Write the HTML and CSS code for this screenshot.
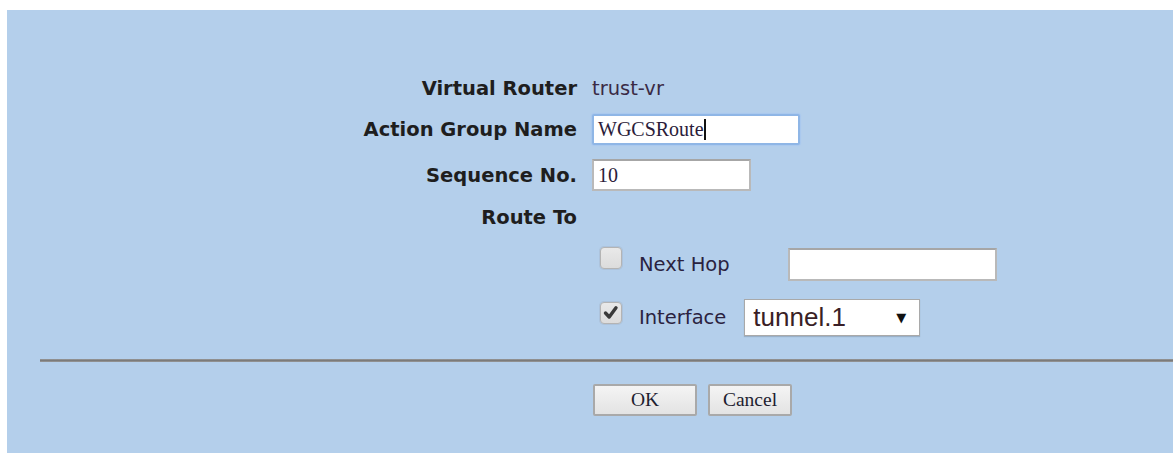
FILE: index.html
```html
<!DOCTYPE html>
<html lang="en">
<head>
<meta charset="utf-8">
<title>Routing Action Group</title>
<link rel="stylesheet" href="styles.css">
</head>
<body>
<div class="panel">
  <form class="route-form">
    <div class="fields">
      <label class="lbl">Virtual Router</label>
      <span class="val">trust-vr</span>

      <label class="lbl">Action Group Name</label>
      <span class="val"><span class="textbox textbox-focus name-box">WGCSRoute<span class="caret"></span></span></span>

      <label class="lbl">Sequence No.</label>
      <span class="val"><span class="textbox seq-box">10</span></span>

      <label class="lbl">Route To</label>
      <span class="val"></span>
    </div>

    <div class="options">
      <div class="opt-row">
        <span class="check"></span>
        <span class="opt-label hop-label">Next Hop</span>
        <span class="textbox hop-box"></span>
      </div>
      <div class="opt-row">
        <span class="check check-on">
          <svg viewBox="0 0 20 20" width="20" height="20"><path d="M4.5 10 L8.2 14 L15 4.8" fill="none" stroke="#3a3a3a" stroke-width="3.4" stroke-linecap="round" stroke-linejoin="round"/></svg>
        </span>
        <span class="opt-label">Interface</span>
        <span class="dropdown"><span class="dropdown-text">tunnel.1</span><span class="dropdown-arrow">&#9660;</span></span>
      </div>
    </div>

    <hr class="rule">

    <div class="actions">
      <button type="button" class="btn btn-ok">OK</button>
      <button type="button" class="btn btn-cancel">Cancel</button>
    </div>
  </form>
</div>
</body>
</html>
```

FILE: styles.css
```css
html, body {
  margin: 0;
  padding: 0;
  background: #ffffff;
}

.panel {
  margin: 10px 0 0 7px;
  height: 443px;
  background: #b4cfeb;
  overflow: hidden;
}

.route-form {
  margin: 0;
  padding-top: 58px;
  font-family: "DejaVu Sans", Verdana, sans-serif;
  color: #1e1e1e;
}

/* label / value grid */
.fields {
  display: grid;
  grid-template-columns: 570px auto;
  grid-template-rows: 40px 42px 50px 34px;
  column-gap: 15px;
  align-items: center;
}

.lbl {
  justify-self: end;
  font-weight: bold;
  font-size: 19.5px;
  white-space: nowrap;
}

.val {
  display: flex;
  align-items: center;
  font-size: 19.5px;
  color: #3a2a45;
}

.textbox {
  box-sizing: border-box;
  display: flex;
  align-items: center;
  background: #ffffff;
  border: 2px solid #b9b9b9;
  border-top-color: #a6a6a6;
  font-family: "Liberation Serif", "Times New Roman", serif;
  font-size: 20px;
  color: #2b1c3a;
  padding: 0 4px;
}

.textbox-focus {
  border: 2px solid #8fb6e6;
  box-shadow: 0 0 1px 1px #a9c8ef;
  border-radius: 2px;
}

.name-box {
  width: 208px;
  height: 31px;
}

.seq-box {
  width: 159px;
  height: 32px;
}

.caret {
  display: inline-block;
  width: 2px;
  height: 21px;
  background: #111;
}

/* route-to choices */
.options {
  margin: 13px 0 0 593px;
  display: flex;
  flex-direction: column;
  gap: 17px;
}

.opt-row {
  display: flex;
  align-items: center;
}

.opt-row:first-child {
  height: 35px;
}

.opt-row:last-child {
  height: 37px;
}

.check {
  box-sizing: border-box;
  width: 22px;
  height: 22px;
  border: 1px solid #b4b4b4;
  border-radius: 4px;
  background: linear-gradient(#e9e9e9, #dcdcdc);
  box-shadow: 0 0 0 1px rgba(150, 160, 175, 0.25);
  align-self: flex-start;
  display: flex;
  align-items: center;
  justify-content: center;
}

.check-on {
  margin-top: 3px;
}

.opt-label {
  margin-left: 17px;
  font-size: 19.5px;
  color: #2a2240;
  white-space: nowrap;
}

.hop-label {
  width: 149px;
}

.hop-box {
  width: 209px;
  height: 33px;
}

.dropdown {
  box-sizing: border-box;
  margin-left: 18px;
  width: 176px;
  height: 37px;
  display: flex;
  align-items: center;
  justify-content: space-between;
  background: #ffffff;
  border: 1px solid #a9a9a9;
  box-shadow: 0 1px 1px rgba(0, 0, 0, 0.15);
  padding: 0 13px 0 8px;
}

.dropdown-text {
  font-family: "Liberation Sans", Arial, sans-serif;
  font-size: 26px;
  color: #3a1f26;
}

.dropdown-arrow {
  font-family: "DejaVu Sans", sans-serif;
  font-size: 13px;
  color: #111;
}

.rule {
  margin: 23px 0 0 33px;
  height: 3px;
  border: 0;
  background: linear-gradient(#9a9a9a, #7b7b7b 50%, #9a9a9a);
}

.actions {
  margin: 22px 0 0 586px;
  display: flex;
  gap: 11px;
}

.btn {
  box-sizing: border-box;
  height: 32px;
  border: 2px solid #a9a9a9;
  border-radius: 2px;
  background: linear-gradient(#f4f4f4, #e3e3e3);
  font-family: "Liberation Serif", "Times New Roman", serif;
  font-size: 19.5px;
  color: #1e1e30;
  padding: 0;
}

.btn-ok {
  width: 104px;
}

.btn-cancel {
  width: 84px;
}
```
